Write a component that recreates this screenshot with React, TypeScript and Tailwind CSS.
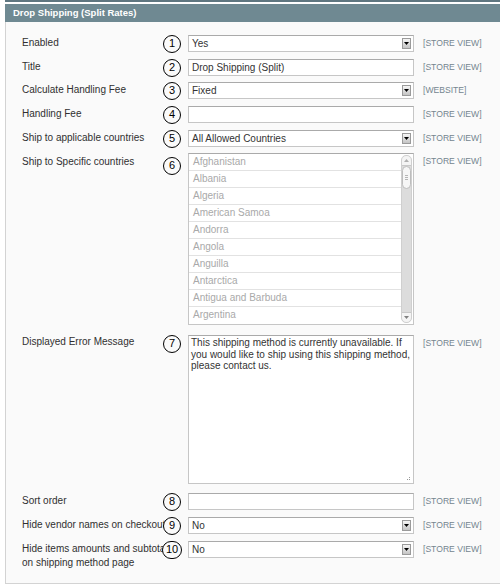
import React from "react";

const FONT = { fontFamily: '"Liberation Sans", Arial, Helvetica, sans-serif' };

const countries = [
  "Afghanistan",
  "Albania",
  "Algeria",
  "American Samoa",
  "Andorra",
  "Angola",
  "Anguilla",
  "Antarctica",
  "Antigua and Barbuda",
  "Argentina",
];

function Circle({ n, wide }: { n: string; wide?: boolean }) {
  return (
    <div
      className={`${wide ? "w-[20px] -ml-px" : "w-[18px]"} h-[18px] shrink-0 rounded-full border border-black bg-[#fafafa] flex items-center justify-center text-[11px] leading-none text-black`}
    >
      {n}
    </div>
  );
}

function Arrow() {
  return (
    <div className="mr-[2px] w-[9px] h-[11px] border border-[#9a9a9a] bg-gradient-to-b from-[#f6f6f6] to-[#c4c4c4] flex items-center justify-center">
      <svg width="5" height="3" viewBox="0 0 5 3">
        <path d="M0 0 L5 0 L2.5 3 Z" fill="#000" />
      </svg>
    </div>
  );
}

function Select({ value }: { value: string }) {
  return (
    <div className="w-[226px] h-[17px] border border-[#c6c6c6] border-t-[#aaaaaa] bg-white flex items-center justify-between">
      <span className="pl-[3px] text-[10px] text-[#333]">{value}</span>
      <Arrow />
    </div>
  );
}

function Input({ value }: { value?: string }) {
  return (
    <div className="w-[226px] h-[17px] border border-[#c6c6c6] border-t-[#aaaaaa] bg-white flex items-center">
      <span className="pl-[3px] text-[10px] text-[#333]">{value}</span>
    </div>
  );
}

function ListBox() {
  return (
    <div className="w-[226px] h-[172px] border border-[#c6c6c6] border-t-[#aaaaaa] bg-white flex">
      <div className="flex-1 flex flex-col">
        {countries.map((c, i) => (
          <div
            key={c}
            className={`h-[17px] px-[4px] text-[10px] leading-[16px] text-[#a9a9a9] ${i < countries.length - 1 ? "border-b border-[#e2e2e2]" : ""}`}
          >
            {c}
          </div>
        ))}
      </div>
      <div className="w-[11px] mr-[1px] my-px bg-[#dcdcdc] rounded-[5px] border border-[#cfcfcf] flex flex-col">
        <div className="h-[10px] rounded-t-[5px] bg-[#f4f4f4] border-b border-[#c8c8c8] flex items-center justify-center">
          <svg width="5" height="3" viewBox="0 0 5 3">
            <path d="M0 3 L5 3 L2.5 0 Z" fill="#b0b0b0" />
          </svg>
        </div>
        <div className="h-[23px] rounded-[5px] bg-[#f6f6f6] border border-[#bdbdbd] flex flex-col items-center justify-center gap-[1px]">
          <div className="w-[3px] h-px bg-[#b5b5b5]" />
          <div className="w-[3px] h-px bg-[#b5b5b5]" />
          <div className="w-[3px] h-px bg-[#b5b5b5]" />
        </div>
        <div className="flex-1" />
        <div className="h-[10px] rounded-b-[5px] bg-[#f4f4f4] border-t border-[#c8c8c8] flex items-center justify-center">
          <svg width="5" height="3" viewBox="0 0 5 3">
            <path d="M0 0 L5 0 L2.5 3 Z" fill="#808080" />
          </svg>
        </div>
      </div>
    </div>
  );
}

function TextArea() {
  return (
    <div className="relative w-[226px] h-[149px] border border-[#c6c6c6] border-t-[#aaaaaa] bg-white pl-[2px] pt-[1px] text-[10px] leading-[11.5px] text-[#333]">
      This shipping method is currently unavailable. If
      <br />
      you would like to ship using this shipping method,
      <br />
      please contact us.
      <div className="absolute right-[3px] bottom-[3px] flex flex-col gap-[1px]">
        <div className="w-px h-px bg-[#999] ml-[2px]" />
        <div className="flex gap-[1px]">
          <div className="w-px h-px bg-[#999]" />
          <div className="w-px h-px bg-[#999]" />
        </div>
      </div>
    </div>
  );
}

function Row({
  label,
  n,
  wide,
  circleMt = 0,
  labelPt = 1,
  scope,
  mt,
  children,
}: {
  label: React.ReactNode;
  n: string;
  wide?: boolean;
  circleMt?: number;
  labelPt?: number;
  scope: string;
  mt: string;
  children: React.ReactNode;
}) {
  return (
    <div className={`flex items-start ${mt}`}>
      <div className="w-[141px] shrink-0 relative">
        <div
          className="w-[150px] text-[10px] leading-[14px] text-[#303030]"
          style={{ paddingTop: labelPt }}
        >
          {label}
        </div>
      </div>
      <div
        className="w-[25px] h-[17px] shrink-0 relative z-10 flex items-center"
        style={{ marginTop: circleMt }}
      >
        <Circle n={n} wide={wide} />
      </div>
      <div className="shrink-0">{children}</div>
      <div className="ml-[9px] h-[16px] pt-[1px] text-[8.6px] leading-[14px] text-[#74858f] whitespace-nowrap">
        {scope}
      </div>
    </div>
  );
}

export default function App() {
  return (
    <div className="w-[500px] h-[587px] bg-white overflow-hidden" style={FONT}>
      <div className="pl-[5px]">
        <div className="h-[2px] bg-[#5f7680]" />
        <div className="h-[2px] bg-white" />
        <div className="h-[18px] bg-[#6f8992] pl-[8px] flex items-center text-white font-bold text-[9.5px]">
          Drop Shipping (Split Rates)
        </div>
        <div className="border-l border-b border-[#d3d3d3] bg-[#fafafa] pl-[16px] pt-[13px] pb-[13px] flex flex-col">
          <Row label="Enabled" n="1" scope="[STORE VIEW]" mt="mt-0">
            <Select value="Yes" />
          </Row>
          <Row label="Title" n="2" scope="[STORE VIEW]" mt="mt-[7px]">
            <Input value="Drop Shipping (Split)" />
          </Row>
          <Row label="Calculate Handling Fee" n="3" scope="[WEBSITE]" mt="mt-[6px]">
            <Select value="Fixed" />
          </Row>
          <Row label="Handling Fee" n="4" scope="[STORE VIEW]" mt="mt-[7px]">
            <Input />
          </Row>
          <Row label="Ship to applicable countries" n="5" scope="[STORE VIEW]" mt="mt-[7px]">
            <Select value="All Allowed Countries" />
          </Row>
          <Row
            label="Ship to Specific countries"
            n="6"
            circleMt={4}
            labelPt={2}
            scope="[STORE VIEW]"
            mt="mt-[6px]"
          >
            <ListBox />
          </Row>
          <Row label="Displayed Error Message" n="7" labelPt={0} scope="[STORE VIEW]" mt="mt-[10px]">
            <TextArea />
          </Row>
          <Row label="Sort order" n="8" scope="[STORE VIEW]" mt="mt-[9px]">
            <Input />
          </Row>
          <Row label="Hide vendor names on checkout" n="9" scope="[STORE VIEW]" mt="mt-[7px]">
            <Select value="No" />
          </Row>
          <Row
            label="Hide items amounts and subtotal on shipping method page"
            n="10"
            wide
            scope="[STORE VIEW]"
            mt="mt-[7px]"
          >
            <Select value="No" />
          </Row>
        </div>
      </div>
    </div>
  );
}
